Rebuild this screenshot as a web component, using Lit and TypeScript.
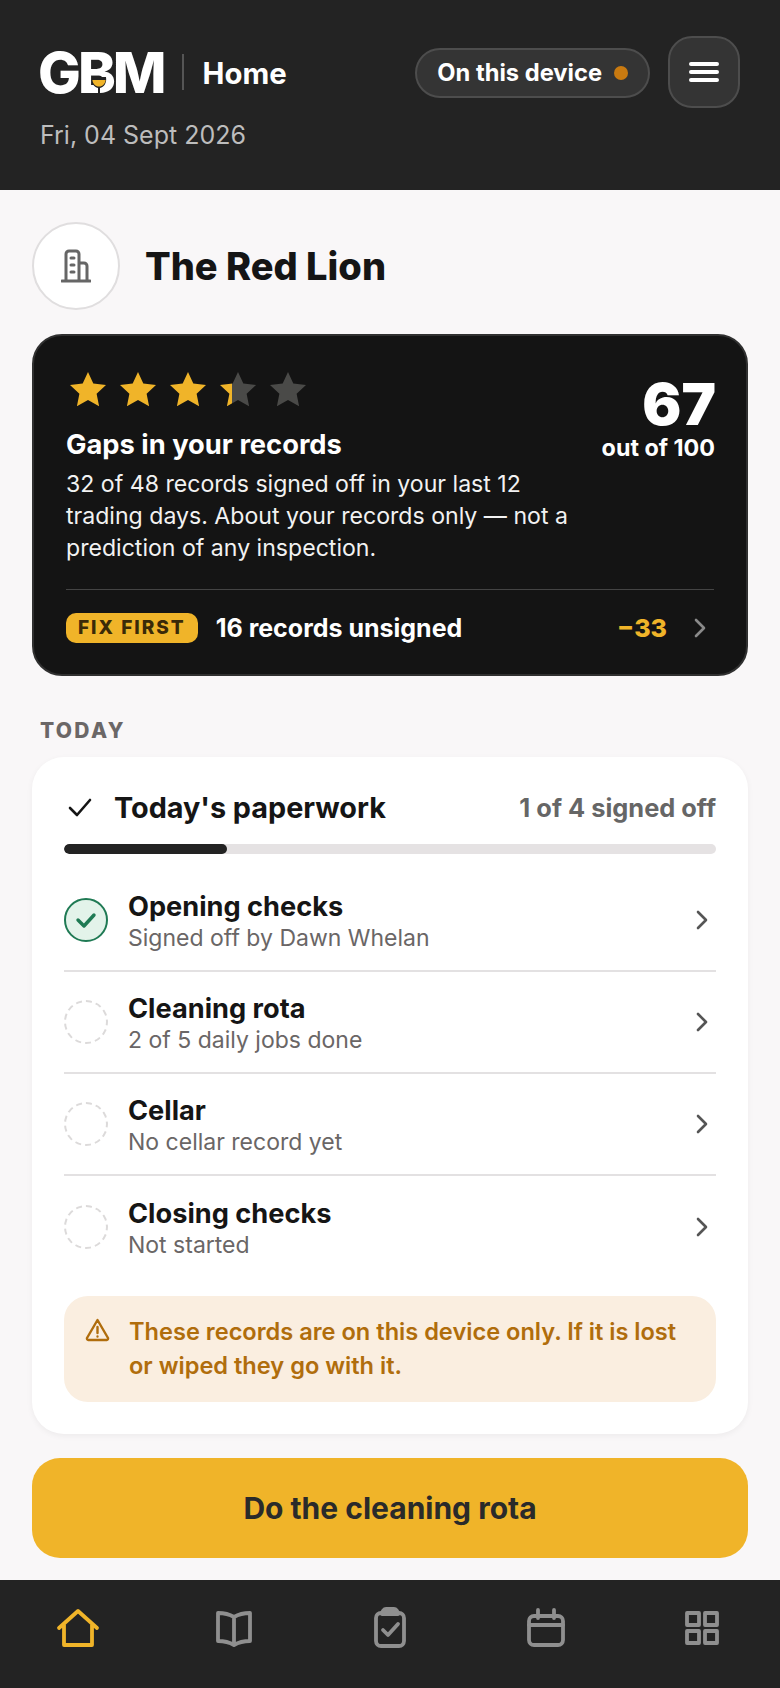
import { LitElement, html, css, svg } from 'lit';
import { customElement } from 'lit/decorators.js';

const chevron = html`<svg class="chev" width="14" height="24" viewBox="0 0 14 24" fill="none" stroke="currentColor" stroke-width="2.6" stroke-linecap="round" stroke-linejoin="round"><path d="M3 4l8 8-8 8"/></svg>`;

const starPath = 'M18 0l5.3 11.6 12.7 1.5-9.4 8.6 2.5 12.5L18 28l-11.1 6.2 2.5-12.5L0 13.1l12.7-1.5z';

const navIcons = [
  svg`<path d="M3 22L22 5l19 17M8 19v20h28V19"/>`,
  svg`<path d="M22 11c-5-3-10-4-16-4v28c6 0 11 1 16 4 5-3 10-4 16-4V7c-6 0-11 1-16 4zM22 11v28"/>`,
  svg`<rect x="8" y="7" width="28" height="33" rx="5"/><path d="M14 8c0-3 2-5 4-5h8c2 0 4 2 4 5z"/><path d="M15 24l5 5 10-11"/>`,
  svg`<rect x="5" y="10" width="34" height="29" rx="5"/><path d="M5 19h34M14 4v8M30 4v8"/>`,
  svg`<rect x="7" y="7" width="12" height="12"/><rect x="25" y="7" width="12" height="12"/><rect x="7" y="25" width="12" height="12"/><rect x="25" y="25" width="12" height="12"/>`,
];

const records = [
  { title: 'Opening checks', sub: 'Signed off by Dawn Whelan', done: true },
  { title: 'Cleaning rota', sub: '2 of 5 daily jobs done', done: false },
  { title: 'Cellar', sub: 'No cellar record yet', done: false },
  { title: 'Closing checks', sub: 'Not started', done: false },
];

@customElement('app-root')
export class AppRoot extends LitElement {
  static styles = css`
    :host {
      display: flex;
      flex-direction: column;
      min-height: 1688px;
      background: #f9f7f8;
      font-family: Inter, 'Noto Sans', sans-serif;
      color: #151515;
    }

    .top {
      height: 190px;
      box-sizing: border-box;
      background: #232323;
      padding: 36px 40px 0 40px;
      display: flex;
      justify-content: space-between;
      align-items: flex-start;
    }
    .brand-line {
      display: flex;
      align-items: center;
      height: 72px;
    }
    .logo {
      position: relative;
      margin-left: -2px;
      font-size: 57px;
      line-height: 1;
      font-weight: 800;
      letter-spacing: -3px;
      color: #fff;
    }
    .glass {
      position: absolute;
      left: 53px;
      top: 33px;
    }
    .sep {
      width: 2px;
      height: 36px;
      background: #555;
      margin: 0 19px 0 18px;
    }
    .page {
      font-size: 29.3px;
      font-weight: 700;
      color: #fff;
      padding-top: 2px;
    }
    .date {
      font-size: 25px;
      color: #bdbdbd;
      margin-top: 12px;
    }
    .top-right {
      display: flex;
      align-items: center;
      gap: 18px;
    }
    .pill {
      display: flex;
      align-items: center;
      gap: 12px;
      height: 50px;
      box-sizing: border-box;
      margin-top: 1px;
      padding: 0 20px;
      border-radius: 25px;
      background: #343434;
      border: 2px solid #4d4d4d;
      color: #fff;
      font-size: 23.7px;
      font-weight: 700;
    }
    .dot {
      width: 14px;
      height: 14px;
      border-radius: 50%;
      background: #c97a10;
    }
    .menu {
      width: 72px;
      height: 72px;
      box-sizing: border-box;
      border-radius: 24px;
      background: #343434;
      border: 2px solid #4d4d4d;
      display: flex;
      align-items: center;
      justify-content: center;
    }

    main {
      flex: 1;
      padding: 32px 32px 0 32px;
    }
    .venue {
      display: flex;
      align-items: center;
      gap: 25px;
    }
    .venue-icon {
      width: 88px;
      height: 88px;
      box-sizing: border-box;
      border-radius: 50%;
      background: #fff;
      border: 2px solid #e0dedf;
      display: flex;
      align-items: center;
      justify-content: center;
    }
    .venue h1 {
      margin: 0;
      font-size: 38px;
      font-weight: 800;
    }

    .score {
      margin-top: 24px;
      height: 342px;
      box-sizing: border-box;
      border-radius: 30px;
      background: #141414;
      border: 2px solid #303030;
      padding: 32px 32px 0 32px;
      color: #fff;
    }
    .score-head {
      display: flex;
      justify-content: space-between;
    }
    .stars {
      display: flex;
      gap: 14px;
      padding-left: 4px;
      margin-top: 4px;
      height: 36px;
    }
    .score h2 {
      margin: 19px 0 0;
      font-size: 27.3px;
      line-height: 36px;
      font-weight: 700;
    }
    .score p {
      margin: 5px 0 0;
      width: 510px;
      font-size: 23.1px;
      line-height: 32px;
      color: #f2f2f2;
    }
    .num {
      text-align: right;
      margin-right: -2px;
    }
    .num b {
      display: block;
      font-size: 58px;
      line-height: 56px;
      font-weight: 900;
      margin-top: 8px;
    }
    .num span {
      display: block;
      margin-top: 2px;
      padding-right: 1px;
      font-size: 23.3px;
      font-weight: 700;
      line-height: 28px;
    }
    .score-foot {
      display: flex;
      align-items: center;
      margin-top: 25px;
      height: 76px;
      border-top: 1px solid #444;
    }
    .badge {
      background: #f0b429;
      color: #3a2a08;
      font-size: 19px;
      font-weight: 800;
      letter-spacing: 2px;
      line-height: 30px;
      padding: 0 12px;
      border-radius: 10px;
    }
    .fix {
      margin-left: 18px;
      flex: 1;
      font-size: 25px;
      font-weight: 700;
    }
    .minus {
      font-size: 25px;
      font-weight: 800;
      color: #f0b429;
      margin-right: 26px;
    }
    .score-foot .chev {
      color: #8a8a8a;
      margin-right: 7px;
    }

    .label {
      margin: 43px 0 0 8px;
      font-size: 21px;
      line-height: 24px;
      font-weight: 800;
      letter-spacing: 2.3px;
      color: #6b6767;
    }

    .card {
      margin-top: 14px;
      box-sizing: border-box;
      height: 677px;
      border-radius: 32px;
      background: #fff;
      box-shadow: 0 2px 6px rgba(0, 0, 0, 0.05);
      padding: 25px 32px 0 32px;
    }
    .card-head {
      display: flex;
      align-items: center;
      height: 50px;
    }
    .card-head svg {
      margin: 0 20px 0 2px;
    }
    .card-head h3 {
      margin: 0;
      flex: 1;
      font-size: 28.8px;
      font-weight: 700;
    }
    .count {
      font-size: 25.4px;
      font-weight: 700;
      color: #666;
    }
    .bar {
      margin-top: 12px;
      height: 10px;
      border-radius: 5px;
      background: #e5e2e3;
      overflow: hidden;
    }
    .bar div {
      height: 100%;
      border-radius: 5px;
      background: #232323;
    }
    .rows {
      margin-top: 16px;
    }
    .row {
      display: flex;
      align-items: center;
      gap: 20px;
      height: 102px;
      box-sizing: border-box;
      border-bottom: 2px solid #e3e1e2;
    }
    .row:last-child {
      border-bottom: none;
    }
    .mark {
      width: 44px;
      height: 44px;
      box-sizing: border-box;
      border-radius: 50%;
      border: 2px dashed #dcdada;
      flex: none;
    }
    .mark.done {
      border: 2px solid #1f7a54;
      background: #e3f3ea;
      display: flex;
      align-items: center;
      justify-content: center;
    }
    .row-text {
      flex: 1;
      padding-top: 3px;
    }
    .row-title {
      font-size: 27.2px;
      line-height: 32px;
      font-weight: 700;
    }
    .row-sub {
      font-size: 23px;
      line-height: 30px;
      color: #6a6666;
    }
    .row .chev {
      color: #555;
      margin-right: 7px;
    }

    .warn {
      margin-top: 18px;
      height: 106px;
      box-sizing: border-box;
      border-radius: 24px;
      background: #faeee0;
      padding: 19px 24px 0 21px;
      display: flex;
      gap: 19px;
      color: #b06d0c;
      font-size: 23.6px;
      line-height: 34px;
      font-weight: 600;
    }
    .warn svg {
      flex: none;
      margin-top: 3px;
    }

    .cta {
      margin-top: 24px;
      height: 100px;
      border-radius: 28px;
      background: #f0b429;
      color: #2a2a2a;
      font-size: 30px;
      font-weight: 700;
      display: flex;
      align-items: center;
      justify-content: center;
    }

    nav {
      height: 108px;
      background: #232323;
      display: grid;
      grid-template-columns: repeat(5, 1fr);
      justify-items: center;
      padding-top: 26px;
      box-sizing: border-box;
      color: #8f8f8f;
    }
    nav .on {
      color: #f0b429;
    }
  `;

  private star(fill: string) {
    return html`<svg width="36" height="36" viewBox="0 0 36 36"><path d=${starPath} fill=${fill}/></svg>`;
  }

  render() {
    return html`
      <header class="top">
        <div>
          <div class="brand-line">
            <div class="logo">
              GBM
              <svg class="glass" width="16" height="16" viewBox="0 0 16 16">
                <path d="M1 0h14c1 6-2 10-6 11v5H7v-5C3 10 0 6 1 0z" fill="#232323"/>
                <path d="M1.4 3h13.2c-.5 4-3 6.5-6.6 6.5S1.9 7 1.4 3z" fill="#f0b429"/>
              </svg>
            </div>
            <div class="sep"></div>
            <div class="page">Home</div>
          </div>
          <div class="date">Fri, 04 Sept 2026</div>
        </div>
        <div class="top-right">
          <div class="pill">On this device <span class="dot"></span></div>
          <div class="menu">
            <svg width="30" height="24" viewBox="0 0 30 24" fill="none" stroke="#fff" stroke-width="4" stroke-linecap="round">
              <path d="M2 4h26M2 12h26M2 20h26"/>
            </svg>
          </div>
        </div>
      </header>

      <main>
        <div class="venue">
          <div class="venue-icon">
            <svg width="30" height="34" viewBox="0 0 30 34" fill="none" stroke="#666" stroke-width="3" stroke-linecap="round" stroke-linejoin="round">
              <path d="M1 32h28M5 32V5a3 3 0 0 1 3-3h7a3 3 0 0 1 3 3v27M18 14h5a3 3 0 0 1 3 3v15M10 9h3M10 16h3M10 23h3"/>
            </svg>
          </div>
          <h1>The Red Lion</h1>
        </div>

        <section class="score">
          <div class="score-head">
            <div>
              <div class="stars">
                ${this.star('#f0b429')}${this.star('#f0b429')}${this.star('#f0b429')}
                <svg width="36" height="36" viewBox="0 0 36 36">
                  <defs>
                    <linearGradient id="part">
                      <stop offset="32%" stop-color="#f0b429"/>
                      <stop offset="32%" stop-color="#4a4a48"/>
                    </linearGradient>
                  </defs>
                  <path d=${starPath} fill="url(#part)"/>
                </svg>
                ${this.star('#4a4a48')}
              </div>
              <h2>Gaps in your records</h2>
            </div>
            <div class="num"><b>67</b><span>out of 100</span></div>
          </div>
          <p>32 of 48 records signed off in your last 12 trading days. About your records only — not a prediction of any inspection.</p>
          <div class="score-foot">
            <span class="badge">FIX FIRST</span>
            <span class="fix">16 records unsigned</span>
            <span class="minus">−33</span>
            ${chevron}
          </div>
        </section>

        <div class="label">TODAY</div>

        <section class="card">
          <div class="card-head">
            <svg width="28" height="24" viewBox="0 0 28 24" fill="none" stroke="#151515" stroke-width="2.6" stroke-linecap="round" stroke-linejoin="round">
              <path d="M4 13l7 7L24 5"/>
            </svg>
            <h3>Today's paperwork</h3>
            <span class="count">1 of 4 signed off</span>
          </div>
          <div class="bar"><div style="width: ${(1 / 4) * 100}%"></div></div>
          <div class="rows">
            ${records.map(
              (r) => html`
                <div class="row">
                  ${r.done
                    ? html`<div class="mark done">
                        <svg width="22" height="18" viewBox="0 0 22 18" fill="none" stroke="#1f7a54" stroke-width="3.4" stroke-linecap="round" stroke-linejoin="round">
                          <path d="M3 9l6 6L19 4"/>
                        </svg>
                      </div>`
                    : html`<div class="mark"></div>`}
                  <div class="row-text">
                    <div class="row-title">${r.title}</div>
                    <div class="row-sub">${r.sub}</div>
                  </div>
                  ${chevron}
                </div>
              `
            )}
          </div>
          <div class="warn">
            <svg width="25" height="24" viewBox="0 0 25 24" fill="none" stroke="#b06d0c" stroke-width="2.4" stroke-linecap="round" stroke-linejoin="round">
              <path d="M12.5 2L23 20a1.5 1.5 0 0 1-1.3 2H3.3A1.5 1.5 0 0 1 2 20zM12.5 9v6M12.5 18.500v.1"/>
            </svg>
            <div>These records are on this device only. If it is lost or wiped they go with it.</div>
          </div>
        </section>

        <div class="cta">Do the cleaning rota</div>
      </main>

      <nav>
        ${navIcons.map(
          (icon, i) => html`
            <svg class=${i === 0 ? 'on' : ''} width="44" height="44" viewBox="0 0 44 44" fill="none" stroke="currentColor" stroke-width="3.8" stroke-linecap="round" stroke-linejoin="round">${icon}</svg>
          `
        )}
      </nav>
    `;
  }
}
